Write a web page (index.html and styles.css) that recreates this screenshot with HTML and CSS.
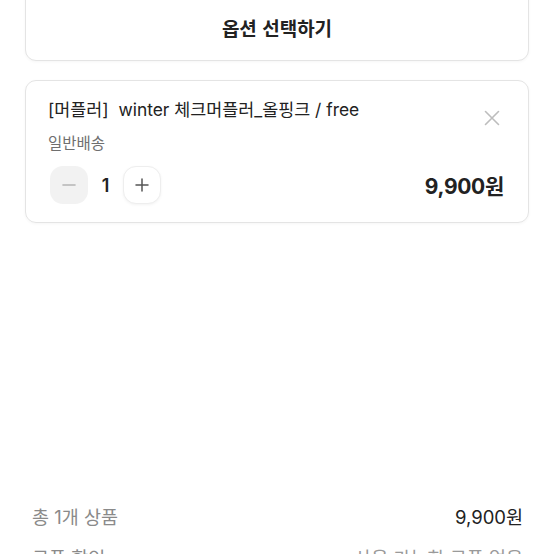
FILE: index.html
```html
<!DOCTYPE html>
<html lang="ko">
<head>
<meta charset="utf-8">
<link rel="stylesheet" href="styles.css">
</head>
<body>
<div class="page">
  <div class="option-btn">옵션 선택하기</div>

  <div class="item-card">
    <div class="item-title">[머플러]&nbsp;&nbsp;winter 체크머플러_올핑크 / free</div>
    <svg class="close" width="16" height="16" viewBox="0 0 16 16"><path d="M1.5 1.5 L14.5 14.5 M14.5 1.5 L1.5 14.5" stroke="#bdbdbd" stroke-width="1.6" fill="none" stroke-linecap="round"/></svg>
    <div class="item-ship">일반배송</div>
    <div class="item-row">
      <div class="stepper">
        <span class="step minus"><svg width="16" height="16" viewBox="0 0 16 16"><path d="M2 8 H14" stroke="#b5b5b5" stroke-width="1.6" stroke-linecap="round"/></svg></span>
        <span class="qty">1</span>
        <span class="step plus"><svg width="16" height="16" viewBox="0 0 16 16"><path d="M2 8 H14 M8 2 V14" stroke="#555" stroke-width="1.5" stroke-linecap="round"/></svg></span>
      </div>
      <div class="item-price">9,900원</div>
    </div>
  </div>

  <div class="summary">
    <div class="sum-row"><span class="sum-label">총 1개 상품</span><span class="sum-value">9,900원</span></div>
    <div class="sum-row"><span class="sum-label">쿠폰 할인</span><span class="sum-muted">사용 가능한 쿠폰 없음</span></div>
  </div>
</div>
</body>
</html>
```

FILE: styles.css
```css
* { box-sizing: border-box; }
html, body { margin: 0; padding: 0; background: #fff; }
body {
  font-family: "Inter", "Noto Sans CJK KR", sans-serif;
  color: #222;
  overflow: hidden;
}
.page {
  width: 554px;
  height: 554px;
  overflow: hidden;
  padding: 0 25px;
}
.option-btn {
  width: 504px;
  height: 81px;
  margin-top: -20px;
  padding-top: 34px;
  border: 1px solid #e4e4e4;
  border-radius: 11px;
  background: #fff;
  box-shadow: 0 1px 3px rgba(0,0,0,0.04);
  font-family: "Noto Sans CJK KR", sans-serif;
  font-size: 19px;
  font-weight: 700;
  line-height: 26px;
  color: #222;
  text-align: center;
}
.item-card {
  position: relative;
  margin-top: 19px;
  width: 504px;
  height: 143px;
  border: 1px solid #e4e4e4;
  border-radius: 11px;
  box-shadow: 0 1px 3px rgba(0,0,0,0.04);
  padding: 17px 24px 0 22px;
}
.item-title {
  font-size: 17.4px;
  line-height: 24px;
  color: #222;
  white-space: nowrap;
}
.close {
  position: absolute;
  top: 29px;
  right: 28px;
}
.item-ship {
  margin-top: 9px;
  font-family: "Noto Sans CJK KR", sans-serif;
  font-size: 15.5px;
  line-height: 22px;
  color: #6f6f6f;
}
.item-row {
  margin-top: 13px;
  display: flex;
  align-items: center;
  justify-content: space-between;
}
.stepper {
  display: flex;
  align-items: center;
  margin-left: 2px;
}
.step {
  width: 38px;
  height: 38px;
  border-radius: 13px;
  display: flex;
  align-items: center;
  justify-content: center;
}
.minus { background: #f2f2f2; }
.plus {
  background: #fff;
  border: 1px solid #eeeeee;
  box-shadow: 0 1px 3px rgba(0,0,0,0.05);
}
.qty {
  width: 35px;
  text-align: center;
  font-size: 18px;
  font-weight: 600;
  color: #222;
}
.item-price {
  font-size: 21px;
  font-weight: 700;
  color: #222;
  letter-spacing: -0.3px;
}
.summary {
  margin-top: 282px;
  padding: 0 6px 0 7px;
}
.sum-row {
  display: flex;
  justify-content: space-between;
  font-size: 18.5px;
  line-height: 24px;
  margin-bottom: 17px;
}
.sum-label { color: #8a8a8a; }
.sum-value { color: #222; }
.sum-muted { color: #9a9a9a; }
```
